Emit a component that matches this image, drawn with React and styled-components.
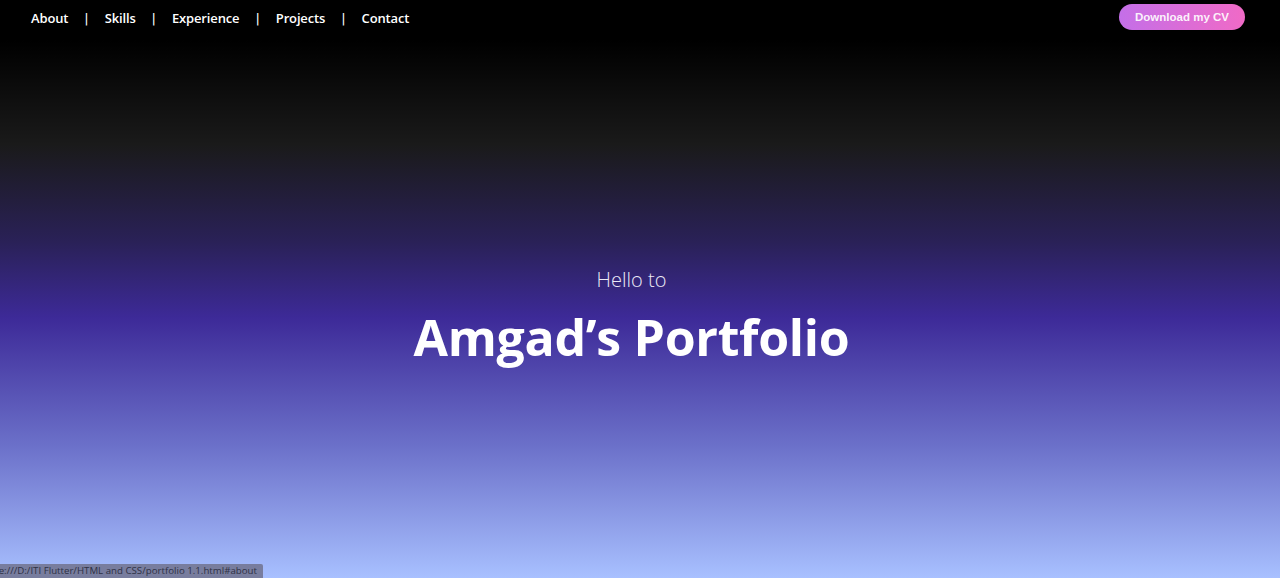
import React from "react";
import styled, { createGlobalStyle } from "styled-components";

const GlobalStyle = createGlobalStyle`
  html, body {
    margin: 0;
    padding: 0;
    height: 100%;
  }
  body {
    font-family: "Open Sans", "Noto Sans", sans-serif;
    background: #000;
  }
`;

const Page = styled.div`
  position: relative;
  height: 578px;
  padding-right: 17px;
  display: flex;
  flex-direction: column;
  overflow: hidden;
  background: linear-gradient(
    to bottom,
    #000 0%,
    #000 7%,
    #1a1a1a 25%,
    #2a2158 42%,
    #3d2a98 55%,
    #6b70c9 77%,
    #a8c0ff 100%
  );
`;

const Header = styled.header`
  display: flex;
  align-items: center;
  justify-content: space-between;
  padding: 4px 18px 0 31px;
  height: 30px;
`;

const Nav = styled.nav`
  display: flex;
  align-items: center;
  gap: 16px;
  margin-top: -2px;
`;

const NavLink = styled.a`
  color: #fff;
  font-size: 13px;
  font-weight: 600;
  text-decoration: none;
  letter-spacing: -0.15px;
`;

const Divider = styled.span`
  color: #fff;
  font-family: "DejaVu Sans", sans-serif;
  font-size: 13px;
  font-weight: 400;
`;

const CvButton = styled.button`
  width: 126px;
  height: 26px;
  margin-top: -4px;
  border: none;
  border-radius: 13px;
  background: linear-gradient(to right, #c46fe8, #f06ac6);
  color: rgba(255, 255, 255, 0.92);
  font-family: "Liberation Sans", Arial, sans-serif;
  font-size: 11.5px;
  font-weight: 700;
  cursor: pointer;
`;

const Hero = styled.main`
  flex: 1;
  display: flex;
  flex-direction: column;
  align-items: center;
  padding-top: 233px;
`;

const Greeting = styled.p`
  margin: 0;
  color: #eceaf6;
  font-size: 20px;
  font-weight: 300;
  line-height: 26px;
`;

const Title = styled.h1`
  margin: 13px 0 0;
  color: #fff;
  font-size: 50px;
  font-weight: 700;
  line-height: 62px;
  letter-spacing: -0.3px;
`;

const StatusBar = styled.div`
  position: absolute;
  left: 0;
  bottom: 0;
  width: 263px;
  height: 14px;
  background: #787d9e;
  border-top-right-radius: 2px;
  display: flex;
  justify-content: flex-end;
  overflow: hidden;
  white-space: nowrap;
  color: #2e3145;
  font-size: 9.7px;
  line-height: 14px;
  padding-right: 6px;
  box-sizing: border-box;
`;

const links = ["About", "Skills", "Experience", "Projects", "Contact"];

export default function App() {
  return (
    <>
      <GlobalStyle />
      <Page>
        <Header>
          <Nav>
            {links.map((l, i) => (
              <React.Fragment key={l}>
                {i > 0 && <Divider>|</Divider>}
                <NavLink href={"#" + l.toLowerCase()}>{l}</NavLink>
              </React.Fragment>
            ))}
          </Nav>
          <CvButton>Download my CV</CvButton>
        </Header>
        <Hero>
          <Greeting>Hello to</Greeting>
          <Title>Amgad’s Portfolio</Title>
        </Hero>
        <StatusBar>file:///D:/ITI Flutter/HTML and CSS/portfolio 1.1.html#about</StatusBar>
      </Page>
    </>
  );
}
